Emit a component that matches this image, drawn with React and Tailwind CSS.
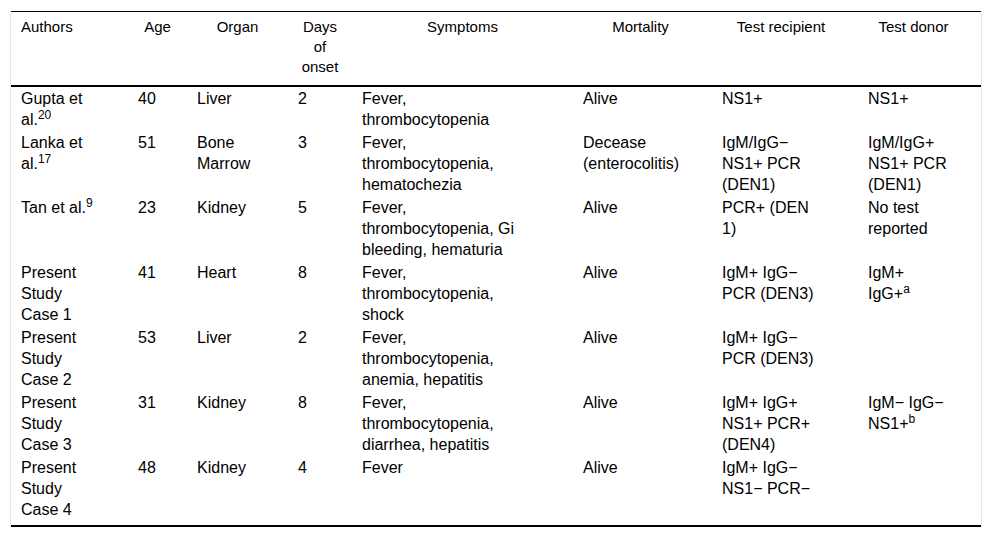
import React from "react";

const columns = [
  { label: ["Authors"], width: "w-[117px]", cls: "text-left px-[10px]" },
  { label: ["Age"], width: "w-[59px]", cls: "text-center px-[10px]" },
  { label: ["Organ"], width: "w-[101px]", cls: "text-center px-[10px]" },
  { label: ["Days", "of", "onset"], width: "w-[64px]", cls: "text-center px-[10px]" },
  { label: ["Symptoms"], width: "w-[221px]", cls: "text-center px-[10px]" },
  { label: ["Mortality"], width: "w-[139px]", cls: "text-center pl-[10px] pr-[14px]" },
  { label: ["Test recipient"], width: "w-[146px]", cls: "text-center pl-[10px] pr-[18px]" },
  { label: ["Test donor"], width: "w-[123px]", cls: "text-center pl-[10px] pr-[22px]" },
];

// each cell is a list of lines, a line may carry a superscript
const rows = [
  [
    ["Gupta et", ["al.", "20"]],
    ["40"],
    ["Liver"],
    ["2"],
    ["Fever,", "thrombocytopenia"],
    ["Alive"],
    ["NS1+"],
    ["NS1+"],
  ],
  [
    ["Lanka et", ["al.", "17"]],
    ["51"],
    ["Bone", "Marrow"],
    ["3"],
    ["Fever,", "thrombocytopenia,", "hematochezia"],
    ["Decease", "(enterocolitis)"],
    ["IgM/IgG−", "NS1+ PCR", "(DEN1)"],
    ["IgM/IgG+", "NS1+ PCR", "(DEN1)"],
  ],
  [
    [["Tan et al.", "9"]],
    ["23"],
    ["Kidney"],
    ["5"],
    ["Fever,", "thrombocytopenia, Gi", "bleeding, hematuria"],
    ["Alive"],
    ["PCR+ (DEN", "1)"],
    ["No test", "reported"],
  ],
  [
    ["Present", "Study", "Case 1"],
    ["41"],
    ["Heart"],
    ["8"],
    ["Fever,", "thrombocytopenia,", "shock"],
    ["Alive"],
    ["IgM+ IgG−", "PCR (DEN3)"],
    ["IgM+", ["IgG+", "a"]],
  ],
  [
    ["Present", "Study", "Case 2"],
    ["53"],
    ["Liver"],
    ["2"],
    ["Fever,", "thrombocytopenia,", "anemia, hepatitis"],
    ["Alive"],
    ["IgM+ IgG−", "PCR (DEN3)"],
    [],
  ],
  [
    ["Present", "Study", "Case 3"],
    ["31"],
    ["Kidney"],
    ["8"],
    ["Fever,", "thrombocytopenia,", "diarrhea, hepatitis"],
    ["Alive"],
    ["IgM+ IgG+", "NS1+ PCR+", "(DEN4)"],
    ["IgM− IgG−", ["NS1+", "b"]],
  ],
  [
    ["Present", "Study", "Case 4"],
    ["48"],
    ["Kidney"],
    ["4"],
    ["Fever"],
    ["Alive"],
    ["IgM+ IgG−", "NS1− PCR−"],
    [],
  ],
];

function Line({ line }) {
  if (Array.isArray(line)) {
    return (
      <div>
        {line[0]}
        <sup>{line[1]}</sup>
      </div>
    );
  }
  return <div>{line}</div>;
}

export default function App() {
  return (
    <div className="min-h-screen bg-white pt-[11px] font-['Liberation_Sans',Arial,sans-serif] text-black">
      <div className="mx-[10px] w-[972px] border-x border-[#e6e6e6] pb-[2px]">
        <table className="w-full table-fixed border-collapse">
          <thead>
            <tr className="border-t border-b-2 border-t-black border-b-black">
              {columns.map((col, i) => (
                <th
                  key={i}
                  className={`${col.width} ${col.cls} pt-[5px] pb-[8px] align-top text-[15px] font-normal leading-[20px]`}
                >
                  {col.label.map((l, j) => (
                    <div key={j}>{l}</div>
                  ))}
                </th>
              ))}
            </tr>
          </thead>
          <tbody className="border-b-2 border-black">
            {rows.map((row, r) => (
              <tr key={r}>
                {row.map((cell, c) => (
                  <td
                    key={c}
                    className={`px-[10px] pt-[1px] align-top text-[16px] leading-[21px] whitespace-nowrap ${
                      r === rows.length - 1 ? "pb-[5px]" : "pb-[1px]"
                    }`}
                  >
                    {cell.map((line, k) => (
                      <Line key={k} line={line} />
                    ))}
                  </td>
                ))}
              </tr>
            ))}
          </tbody>
        </table>
      </div>
    </div>
  );
}
